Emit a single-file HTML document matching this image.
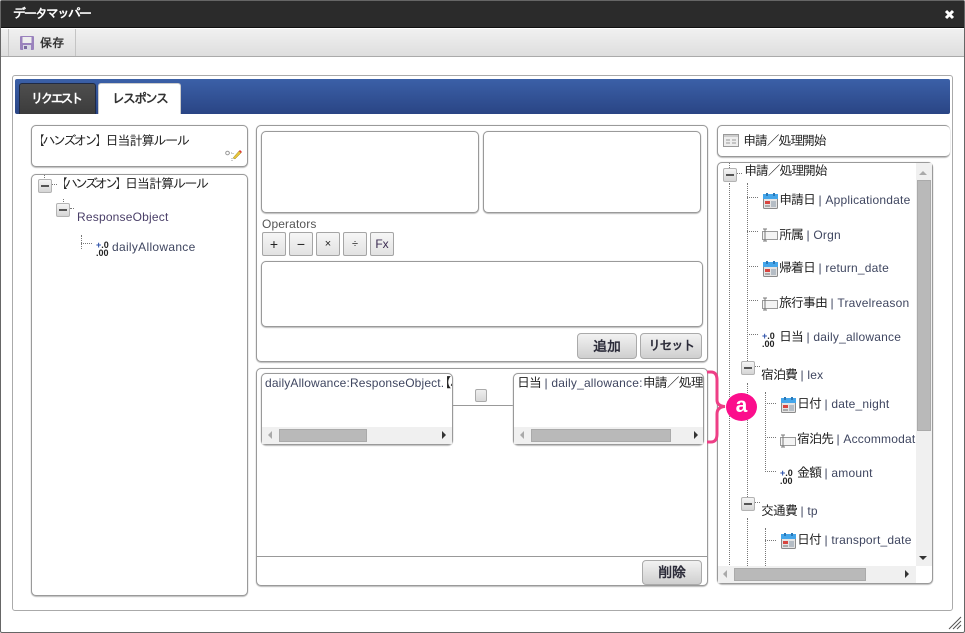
<!DOCTYPE html>
<html lang="ja"><head><meta charset="utf-8"><title>データマッパー</title>
<style>
html,body{margin:0;padding:0;background:#fff}
body{width:965px;height:633px;position:relative;overflow:hidden;font-family:"Liberation Sans","IPAGothic","Noto Sans CJK JP",sans-serif;font-size:12px;color:#3f4660}
div,span,svg{position:absolute;box-sizing:border-box}
.t{white-space:nowrap;line-height:16px;height:16px;letter-spacing:.2px}
.t b{position:static;font-weight:normal;color:#222;font-size:13px;letter-spacing:-1px}
.t i{font-style:normal;color:#222;font-size:13px}
.p{background:#fff;border:1px solid #9a9a9a;border-radius:5px;box-shadow:0 1px 1px #bbb,0 0 1px #ccc}
.btn{background:linear-gradient(#f2f2f2,#cfcfcf);border:1px solid #aaa;border-radius:4px;text-align:center;font-weight:bold;font-size:14px;color:#2c2c3a;line-height:24px}
.op{background:linear-gradient(#f6f6f6,#e2e2e2);border:1px solid #a5a5a5;border-radius:2px;width:24px;height:24px;top:232px;text-align:center;line-height:22px;color:#222;font-size:14px}
.sb{background:#f0f0f0}
.th{background:#b9b9b9;border:1px solid #aaa}
.m{width:14px;height:14px;background:linear-gradient(#f5f5f5,#d5d5d5);border:1px solid #b3b3b3;border-radius:2px}
.m:after{content:"";position:absolute;left:2px;top:5px;width:8px;height:2px;background:#555}
.v{width:0;border-left:1px dotted #777}
.h{height:0;border-top:1px dotted #777}
.n{font-size:9px;line-height:8px;font-weight:bold;color:#222;width:16px;height:16px;text-align:left;white-space:pre}
.n em{font-style:normal;color:#2a4fa8}
</style></head><body>
<svg width="0" height="0" style="left:0;top:0"><defs>
<symbol id="cal" viewBox="0 0 15 16"><rect x=".5" y="1.500" width="14" height="14" rx="1" fill="#e4e4e4" stroke="#8a8a8a"/><rect x="0" y="1" width="15" height="5" fill="#45a6ea"/><rect x="3" y="0" width="2" height="3" fill="#2a78b8"/><rect x="10" y="0" width="2" height="3" fill="#2a78b8"/><rect x="2" y="8" width="5" height="3" fill="#d8453f"/><rect x="2" y="12" width="5" height="2" fill="#aaa"/><rect x="8" y="8" width="5" height="6" fill="#b5bdc5"/></symbol>
<symbol id="txt" viewBox="0 0 17 14"><rect x="1.500" y="3.500" width="15" height="8" fill="#f4f4f4" stroke="#999"/><path d="M2 1h4M4 1v12M2 13h4" stroke="#777" fill="none"/></symbol>
</defs></svg>

<!-- window frame -->
<div style="left:0;top:0;width:965px;height:633px;border:1px solid #666;border-radius:2px"></div>
<div style="left:1px;top:1px;width:963px;height:27px;background:#2b2b2b;border-bottom:1px solid #111"></div>
<div class="t" style="left:13px;top:6px;color:#fff;font-weight:bold;font-size:13px;letter-spacing:-2px">データマッパー</div>
<svg style="left:944px;top:9px" width="11" height="11" viewBox="0 0 11 11"><path d="M2 2l7 7M9 2l-7 7" stroke="#fff" stroke-width="3"/></svg>
<div style="left:1px;top:29px;width:963px;height:28px;background:linear-gradient(#f0f0f0,#dedede);border-bottom:1px solid #aaa"></div>
<div style="left:8px;top:29px;width:68px;height:27px;border-left:1px solid #c4c4c4;border-right:1px solid #c4c4c4"></div>
<svg style="left:20px;top:36px" width="14" height="14" viewBox="0 0 14 14"><rect width="14" height="14" rx="1" fill="#9a82bd"/><rect x="2.500" y="1" width="9" height="6" fill="#eee"/><rect x="3" y="9" width="8" height="5" fill="#d8d8e4"/><rect x="4" y="10" width="3" height="3" fill="#7a6aa0"/></svg>
<div class="t" style="left:40px;top:35px;font-weight:bold;font-size:12px;color:#333">保存</div>

<!-- outer panel -->
<div style="left:12px;top:75px;width:941px;height:536px;border:1px solid #aaa;border-radius:3px"></div>
<div style="left:15px;top:79px;width:935px;height:35px;background:linear-gradient(#3b60a8,#2a4585);border-radius:2px"></div>
<div style="left:19px;top:83px;width:77px;height:31px;background:linear-gradient(#4e4e4e,#3c3c3c);border:1px solid #1f2a44;border-bottom:0;border-radius:3px 3px 0 0;color:#fff;font-weight:bold;font-size:13px;letter-spacing:-3px;text-align:center;line-height:29px;padding-right:4px">リクエスト</div>
<div style="left:98px;top:83px;width:83px;height:31px;background:#fff;border:1px solid #ccc;border-bottom:0;border-radius:3px 3px 0 0;color:#333;font-weight:bold;font-size:13px;letter-spacing:-2px;text-align:center;line-height:29px">レスポンス</div>

<!-- left column -->
<div class="p" style="left:31px;top:125px;width:217px;height:42px"></div>
<div class="t" style="left:32px;top:133px;font-size:13px;color:#222"><i style="letter-spacing:-2.500px">【ハンズオン】</i><i style="letter-spacing:-1px">日当計算</i><i style="letter-spacing:-1.300px">ルール</i></div>
<svg style="left:225px;top:149px" width="17" height="14" viewBox="0 0 17 14"><circle cx="2.500" cy="4" r="1.800" fill="none" stroke="#999"/><path d="M4 4h4M8 4v2M7 9v4" stroke="#999" fill="none" stroke-dasharray="1 1"/><path d="M8 9l6-7 2 2-6 6z" fill="#e8c33a" stroke="#9a8a30" stroke-width=".5"/><path d="M14 2l1-1 2 2-1 1z" fill="#d33"/></svg>
<div class="p" style="left:31px;top:174px;width:217px;height:422px"></div>
<div class="v" style="left:44px;top:175px;height:5px"></div>
<div class="m" style="left:38px;top:179px"></div>
<div class="h" style="left:52px;top:184px;width:5px"></div>
<div class="t" style="left:55px;top:176px;font-size:13px;color:#222"><i style="letter-spacing:-3px">【ハンズオン】</i><i style="letter-spacing:-1px">日当計算</i><i style="letter-spacing:-1.500px">ルール</i></div>
<div class="v" style="left:63px;top:199px;height:5px"></div>
<div class="m" style="left:56px;top:203px"></div>
<div class="h" style="left:70px;top:208px;width:4px"></div>
<div class="t" style="left:77px;top:209px;color:#4a3f68;letter-spacing:.2px">ResponseObject</div>
<div class="v" style="left:81px;top:235px;height:14px"></div>
<div class="h" style="left:81px;top:243px;width:11px"></div>
<div class="n" style="left:96px;top:241px"><em>+</em>.0
.00</div>
<div class="t" style="left:112px;top:239px;letter-spacing:.3px">dailyAllowance</div>

<!-- middle -->
<div class="p" style="left:256px;top:125px;width:452px;height:237px"></div>
<div class="p" style="left:261px;top:131px;width:218px;height:82px"></div>
<div class="p" style="left:483px;top:131px;width:218px;height:82px"></div>
<div class="t" style="left:262px;top:216px;color:#555;letter-spacing:.12px">Operators</div>
<div class="op" style="left:262px">+</div>
<div class="op" style="left:289px">−</div>
<div class="op" style="left:316px;font-size:11px">×</div>
<div class="op" style="left:343px;font-size:11px">÷</div>
<div class="op" style="left:370px;font-size:12px;color:#3a2a50">Fx</div>
<div class="p" style="left:261px;top:261px;width:442px;height:66px"></div>
<div class="btn" style="left:577px;top:333px;width:60px;height:26px">追加</div>
<div class="btn" style="left:640px;top:333px;width:62px;height:26px;font-size:13px;letter-spacing:-1.500px">リセット</div>

<div class="p" style="left:256px;top:368px;width:452px;height:218px"></div>
<div style="left:257px;top:556px;width:450px;height:1px;background:#999"></div>
<div class="btn" style="left:642px;top:560px;width:60px;height:25px;line-height:23px">削除</div>

<div class="p" style="left:261px;top:373px;width:192px;height:72px;overflow:hidden"></div>
<div class="t" style="left:265px;top:375px;width:187px;overflow:hidden;letter-spacing:.15px">dailyAllowance:ResponseObject.<b style="font-weight:bold;margin-left:-6px">【ハンズオン】</b></div>
<div class="sb" style="left:262px;top:427px;width:190px;height:17px"></div>
<div class="th" style="left:279px;top:429px;width:88px;height:13px"></div>
<svg style="left:267px;top:431px" width="6" height="9"><path d="M5 0v8L1 4z" fill="#aaa"/></svg>
<svg style="left:441px;top:431px" width="6" height="9"><path d="M1 0v8l4-4z" fill="#333"/></svg>

<div style="left:453px;top:405px;width:60px;height:1px;background:#999"></div>
<div style="left:475px;top:389px;width:12px;height:13px;background:linear-gradient(#eee,#d8d8d8);border:1px solid #aaa;border-radius:2px"></div>

<div class="p" style="left:513px;top:373px;width:191px;height:72px"></div>
<div class="t" style="left:517px;top:375px;width:186px;overflow:hidden"><b>日当</b> | daily_allowance:<b>申請／処理開始</b></div>
<div class="sb" style="left:514px;top:427px;width:189px;height:17px"></div>
<div class="th" style="left:531px;top:429px;width:140px;height:13px"></div>
<svg style="left:519px;top:431px" width="6" height="9"><path d="M5 0v8L1 4z" fill="#aaa"/></svg>
<svg style="left:693px;top:431px" width="6" height="9"><path d="M1 0v8l4-4z" fill="#333"/></svg>

<!-- right -->
<div class="p" style="left:717px;top:125px;width:233px;height:32px;border-right:0"></div>
<svg style="left:723px;top:134px" width="16" height="13" viewBox="0 0 16 13"><rect x=".5" y=".5" width="15" height="12" fill="#eee" stroke="#999"/><rect x="1" y="1" width="14" height="2" fill="#ccc"/><path d="M3 6h4M3 9h4M9 6h4M9 9h4" stroke="#999"/></svg>
<div class="t" style="left:743px;top:133px;font-size:13px;color:#222;letter-spacing:-1.200px">申請／処理開始</div>

<div class="p" style="left:717px;top:162px;width:216px;height:422px"></div>
<div style="left:718px;top:163px;width:198px;height:403px;overflow:hidden">
 <div class="v" style="left:11px;top:0;height:5px"></div>
 <div class="v" style="left:11px;top:20px;height:390px"></div>
 <div class="m" style="left:5px;top:5px"></div>
 <div class="h" style="left:19px;top:10px;width:5px"></div>
 <div class="t" style="left:26px;top:0;font-size:13px;color:#222;letter-spacing:-1.200px">申請／処理開始</div>
 <div class="v" style="left:29px;top:20px;height:180px"></div>
 <div class="v" style="left:29px;top:220px;height:120px"></div>
 <div class="v" style="left:29px;top:355px;height:50px"></div>

 <div class="h" style="left:29px;top:34px;width:11px"></div>
 <svg style="left:45px;top:30px" width="15" height="16"><use href="#cal"/></svg>
 <div class="t" style="left:61px;top:29px"><b>申請日</b> | Applicationdate</div>

 <div class="h" style="left:29px;top:68px;width:11px"></div>
 <svg style="left:43px;top:65px" width="17" height="14"><use href="#txt"/></svg>
 <div class="t" style="left:61px;top:64px"><b>所属</b> | Orgn</div>

 <div class="h" style="left:29px;top:103px;width:11px"></div>
 <svg style="left:45px;top:98px" width="15" height="16"><use href="#cal"/></svg>
 <div class="t" style="left:61px;top:97px"><b>帰着日</b> | return_date</div>

 <div class="h" style="left:29px;top:137px;width:11px"></div>
 <svg style="left:43px;top:134px" width="17" height="14"><use href="#txt"/></svg>
 <div class="t" style="left:61px;top:132px"><b>旅行事由</b> | Travelreason</div>

 <div class="h" style="left:29px;top:171px;width:11px"></div>
 <div class="n" style="left:44px;top:169px"><em>+</em>.0
.00</div>
 <div class="t" style="left:61px;top:166px"><b>日当</b> | daily_allowance</div>

 <div class="m" style="left:23px;top:198px"></div>
 <div class="h" style="left:37px;top:203px;width:5px"></div>
 <div class="t" style="left:43px;top:204px"><b>宿泊費</b> | lex</div>

 <div class="v" style="left:47px;top:229px;height:80px"></div>
 <div class="h" style="left:47px;top:240px;width:11px"></div>
 <svg style="left:63px;top:234px" width="15" height="16"><use href="#cal"/></svg>
 <div class="t" style="left:79px;top:233px"><b>日付</b> | date_night</div>

 <div class="h" style="left:47px;top:274px;width:11px"></div>
 <svg style="left:61px;top:271px" width="17" height="14"><use href="#txt"/></svg>
 <div class="t" style="left:79px;top:268px"><b>宿泊先</b> | Accommodation</div>

 <div class="h" style="left:47px;top:308px;width:11px"></div>
 <div class="n" style="left:62px;top:306px"><em>+</em>.0
.00</div>
 <div class="t" style="left:79px;top:302px"><b>金額</b> | amount</div>

 <div class="m" style="left:23px;top:334px"></div>
 <div class="h" style="left:37px;top:339px;width:5px"></div>
 <div class="t" style="left:43px;top:340px"><b>交通費</b> | tp</div>

 <div class="v" style="left:47px;top:365px;height:40px"></div>
 <div class="h" style="left:47px;top:377px;width:11px"></div>
 <svg style="left:63px;top:370px" width="15" height="16"><use href="#cal"/></svg>
 <div class="t" style="left:79px;top:369px"><b>日付</b> | transport_date</div>
</div>
<div class="sb" style="left:916px;top:163px;width:16px;height:403px"></div>
<div class="th" style="left:917px;top:180px;width:14px;height:251px"></div>
<svg style="left:919px;top:170px" width="9" height="6"><path d="M0 5h8L4 1z" fill="#aaa"/></svg>
<svg style="left:919px;top:555px" width="9" height="6"><path d="M0 1h8L4 5z" fill="#333"/></svg>
<div class="sb" style="left:718px;top:566px;width:198px;height:17px"></div>
<div class="th" style="left:734px;top:568px;width:132px;height:13px"></div>
<svg style="left:722px;top:570px" width="6" height="9"><path d="M5 0v8L1 4z" fill="#aaa"/></svg>
<svg style="left:904px;top:570px" width="6" height="9"><path d="M1 0v8l4-4z" fill="#333"/></svg>

<!-- callout -->
<svg style="left:704px;top:368px" width="60" height="78" viewBox="0 0 60 78"><path d="M3 4h4q6 0 6 8v20q0 6 8 6.500q-8 .5-8 7.500v20q0 8-6 8h-4" fill="none" stroke="#ee3f86" stroke-width="3"/></svg>
<div style="left:726px;top:393px;width:31px;height:28px;border-radius:50%;background:#fb0e8c;color:#fff;font-weight:bold;font-size:21px;line-height:26px;text-align:center">a</div>

<svg style="left:948px;top:616px" width="14" height="14" viewBox="0 0 14 14"><path d="M1 13L13 1M5 13l8-8M9 13l4-4" stroke="#555"/></svg>
</body></html>
